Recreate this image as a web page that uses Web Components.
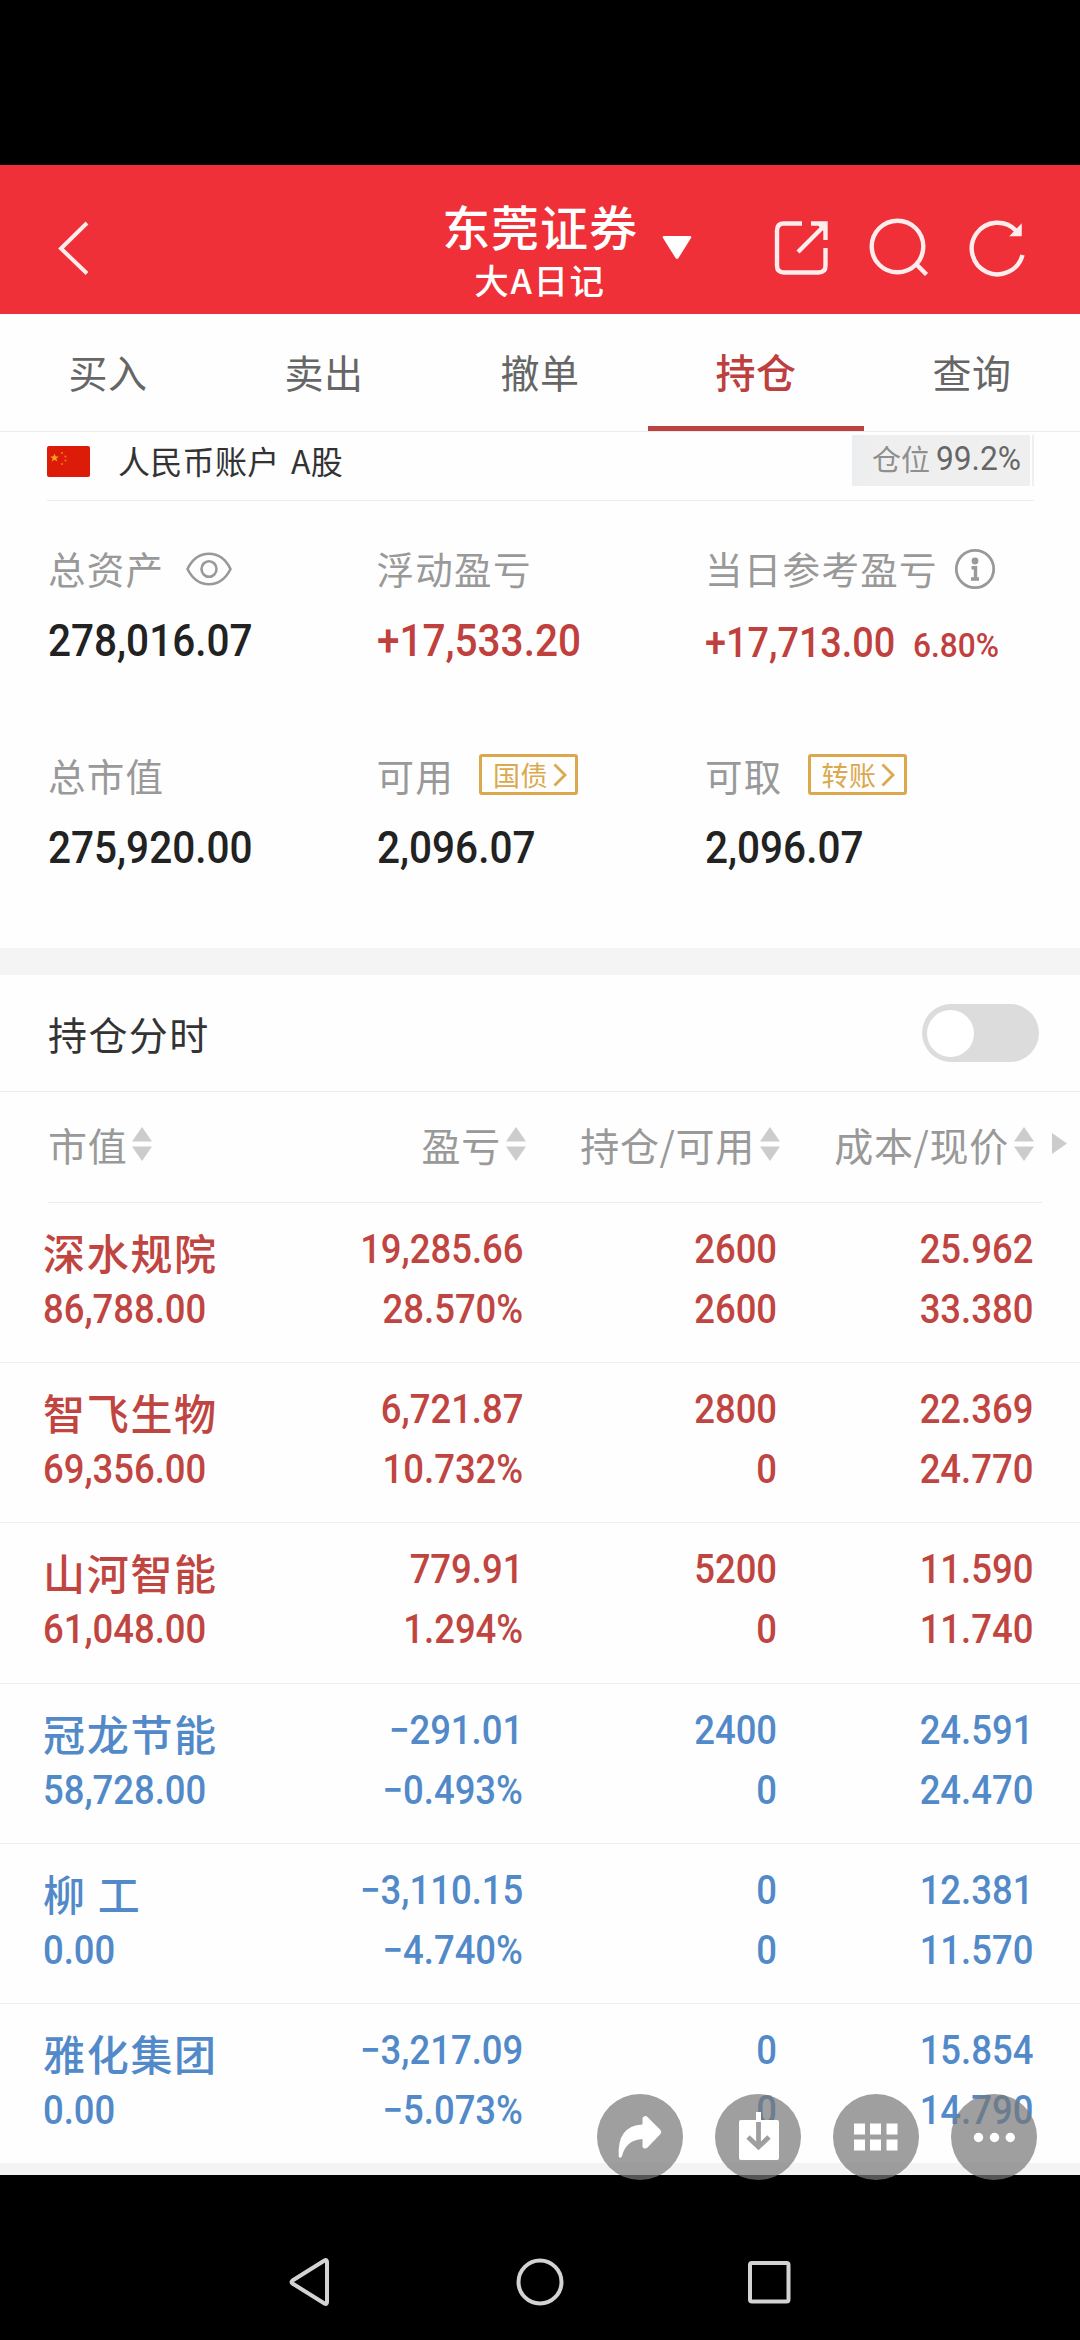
<!DOCTYPE html>
<html lang="zh-CN">
<head>
<meta charset="utf-8">
<title>持仓</title>
<style>
  body {
    margin: 0;
    background: #000;
    font-family: "Noto Sans CJK SC", sans-serif;
  }
</style>
</head>
<body>
<trade-page></trade-page>

<script>
// shared by every element: digits are set in a slightly narrowed Roboto
const baseStyle = `
  * { box-sizing: border-box; }
  .num {
    display: block;
    font-family: Roboto, "Liberation Sans", sans-serif;
    font-weight: 500;
    white-space: nowrap;
    transform: scaleX(0.9);
    transform-origin: left center;
  }
`;

class BaseElement extends HTMLElement {
  constructor() {
    super();
    this.attachShadow({ mode: "open" });
  }

  connectedCallback() {
    this.shadowRoot.innerHTML = `<style>${baseStyle}${this.styles()}</style>${this.render()}`;
  }

  styles() {
    return "";
  }
}

class AppHeader extends BaseElement {
  styles() {
    return `
      :host {
        display: grid;
        grid-template-columns: 1fr auto 1fr;
        height: 149px;
        background: #ef3038;
        color: #fff;
      }
      svg { display: block; fill: none; stroke: #ffecec; stroke-width: 4.4; }
      .back { padding: 53px 0 0 54px; }
      .title { padding-top: 30px; text-align: center; font-weight: 500; }
      h1 { margin: 0; font-size: 48px; line-height: 60px; font-weight: 500; letter-spacing: 0.9px; }
      p { margin: 0; font-size: 34.5px; line-height: 48px; letter-spacing: 1.6px; }
      .right { display: flex; align-items: flex-start; }
      .caret { margin: 70px 0 0 24px; }
      .caret path { fill: #fff; stroke: none; }
      .icons { display: flex; gap: 38px; margin: 51px 0 0 76px; }
    `;
  }

  render() {
    return `
      <div class="back">
        <svg width="38" height="60" viewBox="0 0 38 60"><path d="M33 5L7 30.500L33 55.500" stroke-width="4"/></svg>
      </div>
      <div class="title"><h1>东莞证券</h1><p>大A日记</p></div>
      <div class="right">
        <svg class="caret" width="30" height="26" viewBox="0 0 30 26"><path d="M2 1H28Q30 1 29 3L16.500 23Q15 25 13.500 23L1 3Q0 1 2 1Z"/></svg>
        <div class="icons">
          <svg width="62" height="62" viewBox="0 0 62 62">
            <path d="M34 7.500H16Q9 7.500 9 14.500V49.500Q9 56.500 16 56.500H50.500Q57.500 56.500 57.500 49.500V32M30 36L57 9"/>
            <path d="M43 7.500H57.500V24"/>
            <path d="M50 8H57V15Z" fill="#ffecec" stroke-width="2"/>
          </svg>
          <svg width="62" height="62" viewBox="0 0 62 62"><circle cx="29.500" cy="30.500" r="25.800"/><path d="M48 48L58.500 58.500"/></svg>
          <svg width="62" height="62" viewBox="0 0 62 62">
            <path d="M54.500 39A25.800 25.800 0 1 1 48 14.500"/>
            <path d="M43 19.500H53V9Z" fill="#ffecec" stroke-width="1.500"/>
          </svg>
        </div>
      </div>
    `;
  }
}

class TabItem extends BaseElement {
  styles() {
    return `
      :host {
        flex: 1;
        text-align: center;
        font-size: 39px;
        line-height: 115px;
        letter-spacing: 0.6px;
        color: #666;
        border-bottom: 1px solid #ebebeb;
      }
      :host([active]) {
        color: #bd4040;
        font-weight: 500;
        font-size: 40px;
        box-shadow: inset 0 -5px #bd4342;
      }
    `;
  }

  render() {
    return `<slot></slot>`;
  }
}

class TabBar extends BaseElement {
  styles() {
    return `:host { display: flex; height: 118px; }`;
  }

  render() {
    return `<slot></slot>`;
  }
}

class AccountStrip extends BaseElement {
  styles() {
    return `
      :host {
        display: flex;
        align-items: flex-start;
        height: 69px;
        margin: 0 46px 0 47px;
        border-bottom: 1px solid #ececec;
      }
      svg { display: block; margin-top: 14px; }
      .name { margin-left: 28px; font-size: 32px; line-height: 56px; color: #333; letter-spacing: 0.3px; word-spacing: 4px; }
      .ratio {
        display: flex;
        margin: 3px 0 0 auto;
        width: 182px;
        height: 51px;
        padding-left: 20px;
        line-height: 46px;
        font-size: 29px;
        color: #8f8f8f;
        background: linear-gradient(90deg, #ebedf0, #efefef 20px);
        border-right: 2px solid #efefef;
        box-shadow: inset -2px 0 #fff;
      }
      .ratio .num { transform: scaleX(0.96); font-size: 33px; font-weight: 400; color: #666; margin-left: 6px; line-height: 47px; }
    `;
  }

  render() {
    return `
      <svg width="43" height="31" viewBox="0 0 43 31">
        <rect width="43" height="31" rx="2" fill="#dc1b08"/>
        <path d="M7.500 7.500l1.200 3h3.100l-2.500 2 1 3.100-2.800-1.900-2.800 1.900 1-3.100-2.500-2h3.100z" fill="#f9a51b"/>
        <g fill="#ef7a15"><circle cx="15" cy="7" r="1.100"/><circle cx="18.500" cy="10.500" r="1.100"/><circle cx="18.500" cy="14.500" r="1.100"/><circle cx="15" cy="18" r="1.100"/></g>
      </svg>
      <span class="name">人民币账户 A股</span>
      <span class="ratio">仓位<span class="num">99.2%</span></span>
    `;
  }
}

class AssetCell extends BaseElement {
  styles() {
    return `
      :host { display: block; height: 126px; white-space: nowrap; }
      .label {
        display: flex;
        align-items: center;
        height: 52px;
        font-size: 37.5px;
        line-height: 52px;
        letter-spacing: 1.3px;
        color: #999;
      }
      .value {
        display: flex;
        margin-top: 21px;
        line-height: 52px;
        font-size: 45px;
        color: #222;
      }
      :host([up]) .value { color: #c0403d; }
      :host([small]) .value { font-size: 42px; }
      :host([small]) .value .num { line-height: 55px; }
      :host([small]) .value .pct { font-size: 34px; line-height: 60px; margin-left: -3px; transform: scaleX(0.93); }
    `;
  }

  render() {
    const pct = this.getAttribute("pct");
    return `
      <div class="label">${this.getAttribute("label")}<slot></slot></div>
      <div class="value">
        <span class="num">${this.getAttribute("value")}</span>
        ${pct ? `<span class="num pct">${pct}</span>` : ""}
      </div>
    `;
  }
}

class LinkBadge extends BaseElement {
  styles() {
    return `
      :host {
        display: flex;
        align-items: center;
        width: 99px;
        height: 41px;
        margin: -1px 0 0 25px;
        padding-left: 11px;
        border: 3px solid #dba84d;
        border-radius: 3px;
        font-size: 27px;
        line-height: 35px;
        letter-spacing: 0.4px;
        color: #dba84d;
      }
      svg { margin-left: 5px; }
    `;
  }

  render() {
    return `
      <slot></slot>
      <svg width="14" height="24" viewBox="0 0 14 24"><path d="M1.500 1.500L12 12L1.500 22.500" fill="none" stroke="#dba84d" stroke-width="2.800"/></svg>
    `;
  }
}

class EyeIcon extends BaseElement {
  styles() {
    return `:host { display: block; margin: 1px 0 0 22px; } svg { display: block; }`;
  }

  render() {
    return `
      <svg width="46" height="34" viewBox="0 0 46 34" fill="none" stroke="#999" stroke-width="2.600">
        <path d="M1.500 17Q9 1.800 23 1.800T44.500 17Q37 32.200 23 32.200T1.500 17Z"/>
        <ellipse cx="23" cy="17" rx="7.500" ry="7.800"/>
      </svg>
    `;
  }
}

class InfoIcon extends BaseElement {
  styles() {
    return `:host { display: block; margin: 2px 0 0 16px; } svg { display: block; }`;
  }

  render() {
    return `
      <svg width="42" height="42" viewBox="0 0 42 42" fill="none" stroke="#999" stroke-width="2.800">
        <circle cx="21" cy="21" r="18.700"/>
        <circle cx="21" cy="13" r="3.400" fill="#999" stroke="none"/>
        <path d="M17.500 19.800H21.500V30.500M17 31H25" stroke-width="3.400"/>
      </svg>
    `;
  }
}

class AssetSummary extends BaseElement {
  styles() {
    return `
      :host {
        display: grid;
        grid-template-columns: repeat(3, 328.5px);
        row-gap: 81px;
        align-content: start;
        height: 447px;
        padding: 41px 0 0 48px;
      }
    `;
  }

  render() {
    return `
      <asset-cell label="总资产" value="278,016.07"><eye-icon></eye-icon></asset-cell>
      <asset-cell label="浮动盈亏" value="+17,533.20" up></asset-cell>
      <asset-cell label="当日参考盈亏" value="+17,713.00" pct="6.80%" up small><info-icon></info-icon></asset-cell>
      <asset-cell label="总市值" value="275,920.00"></asset-cell>
      <asset-cell label="可用" value="2,096.07"><link-badge>国债</link-badge></asset-cell>
      <asset-cell label="可取" value="2,096.07"><link-badge>转账</link-badge></asset-cell>
    `;
  }
}

class ToggleRow extends BaseElement {
  styles() {
    return `
      :host {
        display: flex;
        align-items: center;
        justify-content: space-between;
        height: 144px;
        padding: 0 41px 0 48px;
        border-top: 27px solid #f4f4f4;
        border-bottom: 1px solid #ececec;
        font-size: 39px;
        line-height: 60px;
        letter-spacing: 1.4px;
        color: #333;
      }
      .switch {
        width: 117px;
        height: 58px;
        padding: 6px 5px;
        border-radius: 29px;
        background: #dcdcdc;
      }
      .knob { width: 47px; height: 47px; border-radius: 50%; background: #fff; }
    `;
  }

  render() {
    return `<slot></slot><div class="switch"><div class="knob"></div></div>`;
  }
}

class SortLabel extends BaseElement {
  styles() {
    return `
      :host { display: flex; align-items: center; justify-content: flex-end; white-space: nowrap; }
      :host([start]) { justify-content: flex-start; }
      svg { display: block; margin: -1px 0 0 5px; fill: #ccc; }
    `;
  }

  render() {
    return `<slot></slot><svg width="20" height="34" viewBox="0 0 20 34"><path d="M10 0L20 14.500H0ZM0 19.500H20L10 34Z"/></svg>`;
  }
}

class HoldingHeader extends BaseElement {
  styles() {
    return `
      :host {
        display: grid;
        grid-template-columns: 180px 298px 254px 254px 1fr;
        align-items: center;
        height: 111px;
        margin: 0 0 0 48px;
        padding-bottom: 7px;
        font-size: 39px;
        line-height: 58px;
        letter-spacing: 0.7px;
        color: #999;
        background: linear-gradient(#ececec, #ececec) 0 100% / 994px 1px no-repeat;
      }
      svg { display: block; margin: -1px 0 0 18px; fill: #ccc; }
    `;
  }

  render() {
    return `
      <sort-label start>市值</sort-label>
      <sort-label>盈亏</sort-label>
      <sort-label>持仓/可用</sort-label>
      <sort-label>成本/现价</sort-label>
      <svg width="15" height="21" viewBox="0 0 15 21"><path d="M0 0L15 10.500L0 21Z"/></svg>
    `;
  }
}

class HoldingRow extends BaseElement {
  styles() {
    return `
      :host {
        display: grid;
        grid-template-columns: 250px 230px 254px 256px;
        align-items: start;
        height: 160.2px;
        padding: 20px 0 0 43px;
        border-bottom: 1px solid #f0f0f0;
        color: #c04541;
        font-size: 40.5px;
        line-height: 52px;
      }
      :host([down]) { color: #5189c9; }
      .name { font-size: 42px; line-height: 58px; font-weight: 500; letter-spacing: 1.7px; margin-bottom: 2px; white-space: pre; }
      .pair { display: flex; flex-direction: column; gap: 8px; align-items: flex-end; }
      .pair .num { transform-origin: right center; }
    `;
  }

  render() {
    const get = (key) => this.getAttribute(key).split("|");
    const pair = (key) => {
      const [top, bottom] = get(key);
      return `<div class="pair"><span class="num">${top}</span><span class="num">${bottom}</span></div>`;
    };
    return `
      <div><div class="name">${this.getAttribute("name")}</div><span class="num">${this.getAttribute("value")}</span></div>
      ${pair("profit")}${pair("amount")}${pair("price")}
    `;
  }
}

class HoldingList extends BaseElement {
  styles() {
    return `:host { display: block; height: 973px; overflow: hidden; border-bottom: 13px solid #f3f3f3; }`;
  }

  render() {
    const rows = [
      ["深水规院", "86,788.00", "19,285.66|28.570%", "2600|2600", "25.962|33.380"],
      ["智飞生物", "69,356.00", "6,721.87|10.732%", "2800|0", "22.369|24.770"],
      ["山河智能", "61,048.00", "779.91|1.294%", "5200|0", "11.590|11.740"],
      ["冠龙节能", "58,728.00", "−291.01|−0.493%", "2400|0", "24.591|24.470"],
      ["柳 工", "0.00", "−3,110.15|−4.740%", "0|0", "12.381|11.570"],
      ["雅化集团", "0.00", "−3,217.09|−5.073%", "0|0", "15.854|14.790"],
    ];
    return rows.map(([name, value, profit, amount, price]) => `
      <holding-row name="${name}" value="${value}" profit="${profit}" amount="${amount}" price="${price}"
        ${profit.startsWith("−") ? "down" : ""}></holding-row>
    `).join("");
  }
}

// round buttons floating over the end of the list
class FloatActions extends BaseElement {
  styles() {
    return `
      :host { position: absolute; left: 597px; top: 2094px; display: flex; gap: 32px; }
      svg { display: block; width: 86px; height: 86px; border-radius: 50%; background: rgba(120, 120, 120, 0.71); fill: #fff; }
    `;
  }

  render() {
    return `
      <svg viewBox="0 0 86 86">
        <path d="M45.500 24Q48 20.500 51 23.500L63 35.500Q65.500 38 63 40.500L51 53Q48 56 45.500 53V45Q29 46 25 62Q24 65 21.800 63Q19.500 32 45.500 30.500Z"/>
      </svg>
      <svg viewBox="0 0 86 86">
        <path d="M41 18H46V26H41Z"/>
        <rect x="24" y="26" width="40" height="40" rx="2"/>
        <path d="M43.500 28V51M33 43L43.500 53L54 43" fill="none" stroke="#9f9f9f" stroke-width="4.800"/>
      </svg>
      <svg viewBox="0 0 86 86">
        <path d="M21 29.500h11v11h-11zM37 29.500h11v11h-11zM53.500 29.500h11v11h-11zM21 45.500h11v11h-11zM37 45.500h11v11h-11zM53.500 45.500h11v11h-11z"/>
      </svg>
      <svg viewBox="0 0 86 86"><circle cx="27.500" cy="43.500" r="4.700"/><circle cx="43.500" cy="43.500" r="4.700"/><circle cx="59.300" cy="43.500" r="4.700"/></svg>
    `;
  }
}

class SystemNav extends BaseElement {
  styles() {
    return `
      :host { display: flex; justify-content: center; align-items: center; gap: 179px; height: 165px; padding-top: 49px; background: #000; }
      svg { display: block; fill: none; stroke: #d3d3d3; stroke-width: 4; }
    `;
  }

  render() {
    return `
      <svg width="50" height="50" viewBox="0 0 50 50"><path d="M6.500 23.500L38.500 3.500Q41 2 41 5V45Q41 48 38.500 46.500L6.500 26.500Q4.500 25 6.500 23.500Z"/></svg>
      <svg width="50" height="50" viewBox="0 0 50 50"><circle cx="25" cy="25" r="21.500"/></svg>
      <svg width="50" height="50" viewBox="0 0 50 50"><rect x="6" y="6" width="38.500" height="38.500" rx="2"/></svg>
    `;
  }
}

class TradePage extends BaseElement {
  styles() {
    return `
      :host { box-sizing: border-box; display: block; position: relative; width: 1080px; height: 2340px; overflow: hidden; padding-top: 165px; background: #000; }
      main { height: 2010px; background: #fefefe; }
    `;
  }

  render() {
    return `
      <main>
        <app-header></app-header>
        <tab-bar>
          <tab-item>买入</tab-item>
          <tab-item>卖出</tab-item>
          <tab-item>撤单</tab-item>
          <tab-item active>持仓</tab-item>
          <tab-item>查询</tab-item>
        </tab-bar>
        <account-strip></account-strip>
        <asset-summary></asset-summary>
        <toggle-row>持仓分时</toggle-row>
        <holding-header></holding-header>
        <holding-list></holding-list>
      </main>
      <system-nav></system-nav>
      <float-actions></float-actions>
    `;
  }
}

customElements.define("app-header", AppHeader);
customElements.define("tab-item", TabItem);
customElements.define("tab-bar", TabBar);
customElements.define("account-strip", AccountStrip);
customElements.define("eye-icon", EyeIcon);
customElements.define("info-icon", InfoIcon);
customElements.define("link-badge", LinkBadge);
customElements.define("asset-cell", AssetCell);
customElements.define("asset-summary", AssetSummary);
customElements.define("toggle-row", ToggleRow);
customElements.define("sort-label", SortLabel);
customElements.define("holding-header", HoldingHeader);
customElements.define("holding-row", HoldingRow);
customElements.define("holding-list", HoldingList);
customElements.define("float-actions", FloatActions);
customElements.define("system-nav", SystemNav);
customElements.define("trade-page", TradePage);
</script>
</body>
</html>
